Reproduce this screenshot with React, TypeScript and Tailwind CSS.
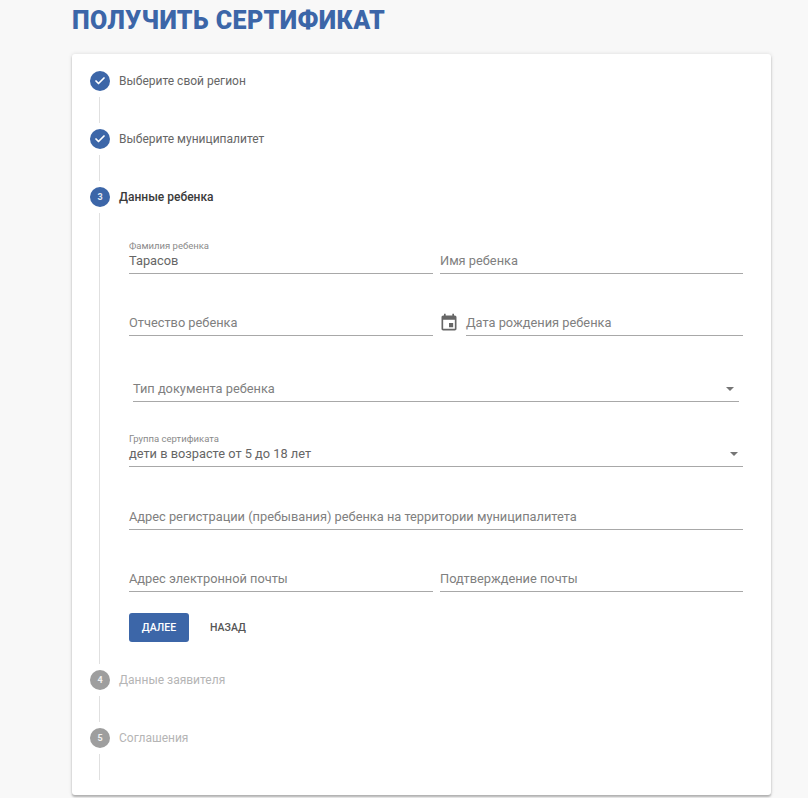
import { Check } from "lucide-react"

const BLUE = "bg-[#3c66a8]"

function StepHead({ label, state, num }: { label: string; state: "done" | "active" | "off"; num?: number }) {
    return (
        <div className="flex h-5 items-center">
            <div className={`flex h-5 w-5 shrink-0 items-center justify-center rounded-full ${state === "off" ? "bg-[#9e9e9e]" : BLUE}`}>
                {state === "done" ? (
                    <Check className="h-3 w-3 text-white" strokeWidth={3.5} />
                ) : (
                    <span className="text-[9px] font-bold leading-none text-white/85">{num}</span>
                )}
            </div>
            <span
                className={`ml-[9px] text-[12px] ${
                    state === "active" ? "font-medium text-[#3a3a3a]" : state === "off" ? "text-[#b5b5b5]" : "text-[#666666]"
                }`}
            >
                {label}
            </span>
        </div>
    )
}

function Connector() {
    return <div className="my-[6px] ml-[9px] h-[26px] w-px bg-[#e0e0e0]" />
}

function Field({ label, value, className = "", caret }: { label: string; value?: string; className?: string; caret?: boolean }) {
    return (
        <div className={`relative flex h-[40px] flex-col justify-end border-b border-[#a8a8a8] pb-[4px] ${className}`}>
            {value && <span className="text-[9.5px] leading-[13px] text-[#8a8a8a]">{label}</span>}
            <div className="flex items-center justify-between">
                <span className={`text-[12.8px] leading-[17px] ${value ? "text-[#666666]" : "text-[#808080]"}`}>{value || label}</span>
                {caret && <span className="mr-[5px] h-0 w-0 border-x-[4px] border-t-[4px] border-x-transparent border-t-[#757575]" />}
            </div>
        </div>
    )
}

export default function App() {
    return (
        <div className="h-[798px] overflow-hidden bg-[#f8f8f8] pl-[72px] pr-[37px] font-['Roboto',sans-serif]">
            <h1 className="flex h-[54px] items-start pt-[6px] text-[25px] font-black leading-[30px] tracking-[0.4px] text-[#3c66a8]">
                ПОЛУЧИТЬ СЕРТИФИКАТ
            </h1>

            <div className="h-[741px] rounded-[3px] bg-white pl-[18px] pr-[28px] pt-[17px] shadow-[0_2px_2px_rgba(0,0,0,0.25),0_0_4px_rgba(0,0,0,0.12)]">
                <StepHead label="Выберите свой регион" state="done" />
                <Connector />
                <StepHead label="Выберите муниципалитет" state="done" />
                <Connector />
                <StepHead label="Данные ребенка" state="active" num={3} />

                <div className="ml-[9px] mt-[6px] h-[451px] border-l border-[#e0e0e0] pl-[29px]">
                    <div className="flex gap-[7px] pt-[21px]">
                        <Field label="Фамилия ребенка" value="Тарасов" className="w-[304px]" />
                        <Field label="Имя ребенка" className="flex-1" />
                    </div>
                    <div className="mt-[22px] flex gap-[7px]">
                        <Field label="Отчество ребенка" className="w-[304px]" />
                        <div className="flex flex-1 items-end">
                            <svg viewBox="0 0 24 24" className="-ml-px mb-[3px] h-5 w-5 shrink-0 fill-[#666666]">
                                <path d="M17 12h-5v5h5v-5zM16 1v2H8V1H6v2H5c-1.11 0-1.99.9-1.99 2L3 19c0 1.1.89 2 2 2h14c1.1 0 2-.9 2-2V5c0-1.1-.9-2-2-2h-1V1h-2zm3 18H5V8h14v11z" />
                            </svg>
                            <Field label="Дата рождения ребенка" className="ml-[7px] flex-1" />
                        </div>
                    </div>
                    <Field label="Тип документа ребенка" caret className="mx-[4px] mt-[26px]" />
                    <Field label="Группа сертификата" value="дети в возрасте от 5 до 18 лет" caret className="mt-[25px]" />
                    <Field label="Адрес регистрации (пребывания) ребенка на территории муниципалитета" className="mt-[23px]" />
                    <div className="mt-[22px] flex gap-[7px]">
                        <Field label="Адрес электронной почты" className="w-[304px]" />
                        <Field label="Подтверждение почты" className="flex-1" />
                    </div>
                    <div className="mt-[21px] flex items-center">
                        <button className={`h-[29px] w-[60px] rounded-[3px] text-[10.5px] font-medium text-white ${BLUE}`}>ДАЛЕЕ</button>
                        <button className="ml-[21px] text-[10.5px] font-medium text-[#555555]">НАЗАД</button>
                    </div>
                </div>

                <div className="mt-[6px]">
                    <StepHead label="Данные заявителя" state="off" num={4} />
                </div>
                <Connector />
                <StepHead label="Соглашения" state="off" num={5} />
                <Connector />
            </div>
        </div>
    )
}
